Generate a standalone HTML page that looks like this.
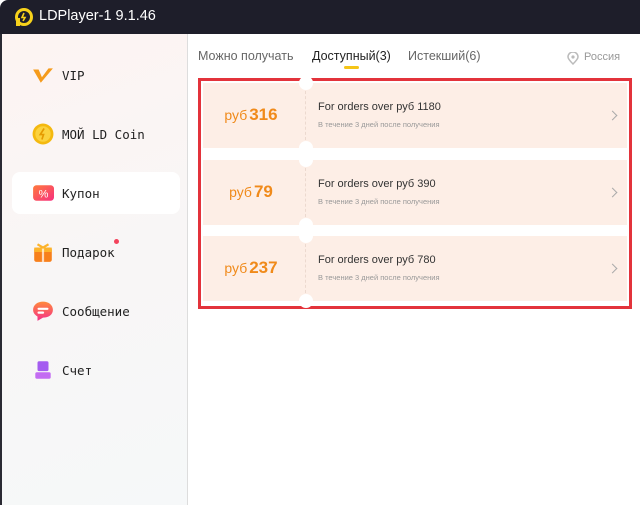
<!DOCTYPE html>
<html><head><meta charset="utf-8"><style>
*{margin:0;padding:0;box-sizing:border-box}
body{width:640px;height:505px;overflow:hidden;background:#fff;font-family:"Liberation Sans","DejaVu Sans",sans-serif;position:relative}
.title{position:absolute;left:0;top:0;width:640px;height:34px;background:#1e1e2a;border-top-left-radius:8px}
.title span{position:absolute;left:39px;top:8px;color:#fff;font-size:14.5px}
.side{position:absolute;left:0;top:34px;width:188px;height:471px;background:linear-gradient(160deg,#fdf4f2 0%,#f8f6f6 50%,#f6f8f9 100%);border-left:2px solid #2a2a33;border-right:1px solid #ddd}
.item{position:absolute;left:10px;width:168px;height:42px;border-radius:8px;font-family:"DejaVu Sans Mono","Liberation Mono",monospace;font-size:12.5px;color:#222}
.item.act{background:#fff}
.item .ic{position:absolute;left:20px;top:10px;width:22px;height:22px}
.item .t{position:absolute;left:50px;top:14px}
.tabs{position:absolute;top:49px;font-size:12.5px;color:#666}
.card{position:absolute;left:203px;width:424px;height:65px;background:#fdeee6}
.notch{position:absolute;left:96px;width:14px;height:14px;border-radius:50%;background:#fff}
.dash{position:absolute;left:102px;top:8px;bottom:8px;border-left:1px dashed #ecd9cf}
.amt{position:absolute;left:0;width:96px;top:22px;text-align:center;color:#f08a1a;font-size:14px;white-space:nowrap}
.amt b{font-size:17px;margin-left:2px}
.c1{position:absolute;left:115px;top:18px;font-size:11px;color:#333}
.c2{position:absolute;left:115px;top:37px;font-size:7.5px;color:#999}
.arr{position:absolute;right:11px;top:29px;width:7px;height:7px;border-top:1px solid #aaa;border-right:1px solid #aaa;transform:rotate(45deg)}
</style></head><body>
<div class="title">
<svg style="position:absolute;left:14px;top:8px" width="19" height="19" viewBox="0 0 19 19"><circle cx="10" cy="9" r="7.5" fill="none" stroke="#f7d21b" stroke-width="3"/><rect x="2" y="10" width="4" height="8" fill="#f7d21b"/><path d="M10 5 L8 9.5 H11 L9 13" stroke="#f7d21b" stroke-width="1.6" fill="none"/></svg>
<span>LDPlayer-1 9.1.46</span></div>
<div class="side">
<div class="item" style="top:20px"><svg class="ic" viewBox="0 0 20 20"><path d="M1 5 L8 17 L19 4 L15 4 L9 12 L6 5Z" fill="#f59b1c"/></svg><span class="t">VIP</span></div>
<div class="item" style="top:79px"><svg class="ic" viewBox="0 0 20 20"><circle cx="10" cy="10" r="9.5" fill="#f4b90f"/><circle cx="10" cy="10" r="7" fill="#fbd23e"/><path d="M11 5 L7.5 10.5 H10.5 L9 15" stroke="#e59a00" stroke-width="1.5" fill="none"/></svg><span class="t">МОЙ LD Coin</span></div>
<div class="item act" style="top:138px"><svg class="ic" viewBox="0 0 20 20"><defs><linearGradient id="g1" x1="0" y1="0" x2="1" y2="1"><stop offset="0" stop-color="#ff7a3c"/><stop offset="1" stop-color="#f7307f"/></linearGradient></defs><rect x="1" y="3" width="19" height="14" rx="3" fill="url(#g1)"/><text x="10.5" y="14" font-size="10" fill="#fff" text-anchor="middle" font-family="Liberation Sans">%</text></svg><span class="t">Купон</span></div>
<div class="item" style="top:197px"><svg class="ic" viewBox="0 0 20 20"><rect x="2" y="6" width="16" height="13" rx="2" fill="#f7801c"/><rect x="2" y="6" width="16" height="4" fill="#fcb32a"/><rect x="9" y="6" width="2" height="13" fill="#fff" opacity=".7"/><path d="M5 3 L10 6 L15 3" stroke="#fcb32a" stroke-width="2" fill="none"/></svg><span class="t">Подарок</span><div style="position:absolute;left:102px;top:8px;width:5px;height:5px;border-radius:50%;background:#f3435c"></div></div>
<div class="item" style="top:256px"><svg class="ic" viewBox="0 0 20 20"><defs><linearGradient id="g2" x1="0" y1="0" x2="0" y2="1"><stop offset="0" stop-color="#ff8a3c"/><stop offset="1" stop-color="#f52f8a"/></linearGradient></defs><path d="M10 1.5 C15 1.5 19 4.5 19 9 C19 13.5 15 16 10 16 L5 19 L5 15 C2.5 13.5 1 11.5 1 9 C1 4.5 5 1.5 10 1.5Z" fill="url(#g2)"/><rect x="5" y="7" width="10" height="2" rx="1" fill="#fff"/><rect x="5" y="10.5" width="6" height="2" rx="1" fill="#fff"/></svg><span class="t">Сообщение</span></div>
<div class="item" style="top:315px"><svg class="ic" viewBox="0 0 20 20"><rect x="5" y="2" width="10" height="9" rx="1.5" fill="#a45cf0"/><rect x="3" y="12" width="14" height="6" rx="1.5" fill="#c36cf2"/></svg><span class="t">Счет</span></div>
</div>
<div class="tabs" style="left:198px">Можно получать</div>
<div class="tabs" style="left:312px;color:#222">Доступный(3)</div>
<div style="position:absolute;left:344px;top:66px;width:15px;height:3px;border-radius:2px;background:#f5c518"></div>
<div class="tabs" style="left:408px">Истекший(6)</div>
<svg style="position:absolute;left:567px;top:52px" width="12" height="13" viewBox="0 0 12 13"><path d="M6 12 C2 8 1 6.5 1 5 A5 5 0 0 1 11 5 C11 6.5 10 8 6 12Z" fill="none" stroke="#bbb" stroke-width="1.5"/><circle cx="6" cy="5" r="1.6" fill="#bbb"/></svg>
<div class="tabs" style="left:584px;top:51px;font-size:11px;color:#999">Россия</div>
<div style="position:absolute;left:198px;top:78px;width:434px;height:231px;border:3px solid #e3333b"></div>
<div class="card" style="top:83px"><div class="notch" style="top:-7px"></div><div class="notch" style="bottom:-7px"></div><div class="dash"></div><div class="amt">руб<b>316</b></div><div class="c1">For orders over руб 1180</div><div class="c2">В течение 3 дней после получения</div><div class="arr"></div></div>
<div class="card" style="top:160px"><div class="notch" style="top:-7px"></div><div class="notch" style="bottom:-7px"></div><div class="dash"></div><div class="amt">руб<b>79</b></div><div class="c1">For orders over руб 390</div><div class="c2">В течение 3 дней после получения</div><div class="arr"></div></div>
<div class="card" style="top:236px"><div class="notch" style="top:-7px"></div><div class="notch" style="bottom:-7px"></div><div class="dash"></div><div class="amt">руб<b>237</b></div><div class="c1">For orders over руб 780</div><div class="c2">В течение 3 дней после получения</div><div class="arr"></div></div>
</body></html>
